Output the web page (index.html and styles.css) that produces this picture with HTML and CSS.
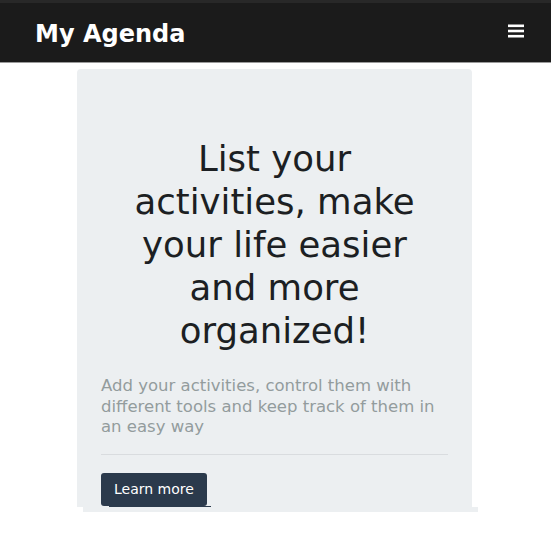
FILE: index.html
```html
<!DOCTYPE html>
<html lang="en">
<head>
<meta charset="utf-8">
<title>My Agenda</title>
<link rel="stylesheet" href="styles.css">
</head>
<body>
<nav class="navbar">
  <a class="brand" href="#">My Agenda</a>
  <button class="toggler" aria-label="Menu">
    <svg width="16" height="14" viewBox="0 0 16 14"><rect x="0" y="0.5" width="16" height="2.6" fill="#fff"/><rect x="0" y="5.7" width="16" height="2.6" fill="#fff"/><rect x="0" y="10.9" width="16" height="2.6" fill="#fff"/></svg>
  </button>
</nav>
<main class="main">
  <section class="hero">
    <h1 class="hero-title">List your activities, make your life easier and more organized!</h1>
    <p class="hero-text">Add your activities, control them with different tools and keep track of them in an easy way</p>
    <hr class="hero-rule">
    <a class="btn" href="#">Learn more</a>
  </section>
  <div class="hero-tail"></div>
</main>
</body>
</html>
```
FILE: styles.css
```css
* { box-sizing: border-box; }
body {
  margin: 0;
  background: #fff;
  font-family: "DejaVu Sans", "Open Sans", sans-serif;
}
.navbar {
  height: 63px;
  background: #1b1b1b;
  border-top: 3px solid #282828;
  border-bottom: 1px solid #9a9a9a;
  display: flex;
  align-items: center;
  justify-content: space-between;
  padding: 0 27px 0 35px;
}
.brand {
  color: #fff;
  text-decoration: none;
  font-size: 24px;
  font-weight: 700;
  margin-top: 2px;
}
.toggler {
  background: none;
  border: 0;
  padding: 0;
  display: flex;
  margin-top: -4px;
}
.main {
  padding: 6px 0 0 77px;
}
.hero {
  width: 395px;
  background: #eceff1;
  border-radius: 4px 4px 0 0;
  padding: 68px 24px 1px;
}
.hero-title {
  margin: 0 auto;
  max-width: 300px;
  text-align: center;
  font-size: 35.5px;
  line-height: 43px;
  font-weight: 400;
  color: #1c1f23;
}
.hero-text {
  margin: 24px 0 0;
  font-size: 16.5px;
  line-height: 20.5px;
  color: #939c9d;
}
.hero-rule {
  margin: 16px 0 18px;
  border: 0;
  border-top: 1px solid #d9dcdf;
}
.btn {
  position: relative;
  display: inline-block;
  background: #2b3a4c;
  color: #fff;
  text-decoration: none;
  font-size: 14px;
  line-height: 33px;
  height: 33px;
  padding: 0 13px;
  border-radius: 3px;
}
.btn::after {
  content: "";
  position: absolute;
  left: 8px;
  right: -4px;
  bottom: -1px;
  height: 1px;
  background: #2b3a4c;
}
.hero-tail {
  margin-left: 6px;
  width: 395px;
  height: 5px;
  background: #eceff1;
}
```
